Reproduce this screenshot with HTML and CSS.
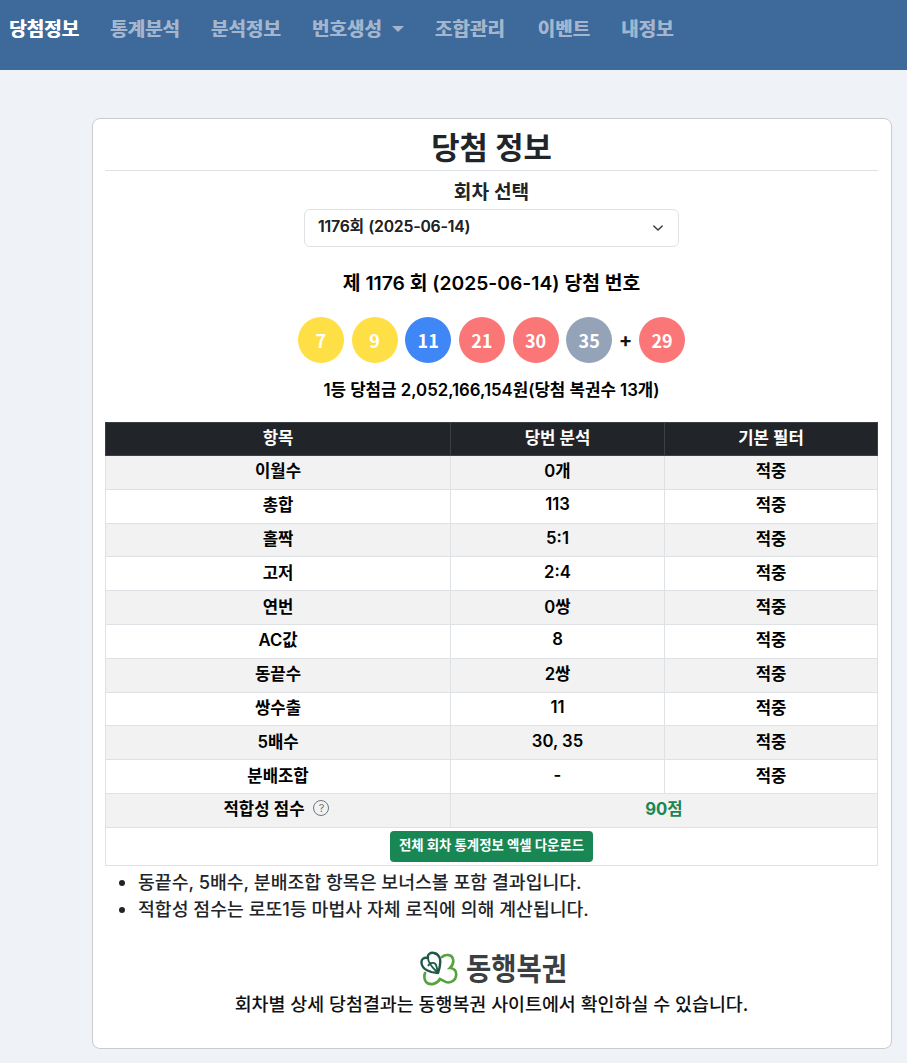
FILE: index.html
```html
<!DOCTYPE html>
<html lang="ko">
<head>
<meta charset="utf-8">
<title>당첨 정보</title>
<link rel="stylesheet" href="styles.css">
</head>
<body>
<nav class="navbar">
  <a class="nav-link active" href="#">당첨정보</a>
  <a class="nav-link" href="#">통계분석</a>
  <a class="nav-link" href="#">분석정보</a>
  <a class="nav-link" href="#">번호생성<span class="caret"></span></a>
  <a class="nav-link nav-link-wide" href="#">조합관리</a>
  <a class="nav-link" href="#">이벤트</a>
  <a class="nav-link" href="#">내정보</a>
</nav>
<main class="page">
  <section class="card">
    <h1 class="title">당첨 정보</h1>
    <div class="select-block">
      <div class="select-label">회차 선택</div>
      <div class="select">
        <span>1176회 (2025-06-14)</span>
        <svg class="chevron" width="16" height="16" viewBox="0 0 16 16"><path d="M2 5l6 6 6-6" fill="none" stroke="#343a40" stroke-width="2" stroke-linecap="round" stroke-linejoin="round" transform="translate(2.4 2.4) scale(.7)"/></svg>
      </div>
    </div>
    <h2 class="draw-title">제 1176 회 (2025-06-14) 당첨 번호</h2>
    <div class="balls">
      <span class="ball yellow">7</span>
      <span class="ball yellow">9</span>
      <span class="ball blue">11</span>
      <span class="ball red">21</span>
      <span class="ball red">30</span>
      <span class="ball gray">35</span>
      <span class="plus">+</span>
      <span class="ball red">29</span>
    </div>
    <p class="prize">1등 당첨금 2,052,166,154원(당첨 복권수 13개)</p>
    <table class="stats">
      <thead>
        <tr><th class="c1">항목</th><th class="c2">당번 분석</th><th class="c3">기본 필터</th></tr>
      </thead>
      <tbody>
        <tr><td>이월수</td><td>0개</td><td>적중</td></tr>
        <tr><td>총합</td><td>113</td><td>적중</td></tr>
        <tr><td>홀짝</td><td>5:1</td><td>적중</td></tr>
        <tr><td>고저</td><td>2:4</td><td>적중</td></tr>
        <tr><td>연번</td><td>0쌍</td><td>적중</td></tr>
        <tr><td>AC값</td><td>8</td><td>적중</td></tr>
        <tr><td>동끝수</td><td>2쌍</td><td>적중</td></tr>
        <tr><td>쌍수출</td><td>11</td><td>적중</td></tr>
        <tr><td>5배수</td><td>30, 35</td><td>적중</td></tr>
        <tr><td>분배조합</td><td>-</td><td>적중</td></tr>
        <tr class="score-row">
          <td><span class="score-label">적합성 점수<span class="help">?</span></span></td>
          <td colspan="2" class="score">90점</td>
        </tr>
        <tr class="download-row"><td colspan="3"><a class="btn" href="#">전체 회차 통계정보 엑셀 다운로드</a></td></tr>
      </tbody>
    </table>
    <ul class="notes">
      <li>동끝수, 5배수, 분배조합 항목은 보너스볼 포함 결과입니다.</li>
      <li>적합성 점수는 로또1등 마법사 자체 로직에 의해 계산됩니다.</li>
    </ul>
    <div class="logo">
      <svg width="38" height="36" viewBox="0 0 38 36">
        <path d="M22 6C25 3 32 3 33 8C34 12 32 15 30 17C34 17 37 20 36 25C35 31 28 33 24 30L20 28C17 33 10 35 6 31C4 28 4 25 5 22" fill="none" stroke="#55a33c" stroke-width="2.6" stroke-linecap="round"/>
        <path d="M18 22C10 22 2 18 1.5 12C1 8 4 6 8 7C7 3 11 1 14 2C19 3 21 8 20 13C20 16 19 19 18 22Z" fill="none" stroke="#1f5a46" stroke-width="2.4" stroke-linejoin="round"/>
        <path d="M18 22C14 18 8 13 8 7M8 15C10 11 15 11 16 14C17 16 17 19 18 22" fill="none" stroke="#1f5a46" stroke-width="1.8"/>
      </svg>
      <span class="logo-text">동행복권</span>
    </div>
    <p class="logo-note">회차별 상세 당첨결과는 동행복권 사이트에서 확인하실 수 있습니다.</p>
  </section>
</main>
</body>
</html>
```
FILE: styles.css
```css
* { box-sizing: border-box; }
html, body { margin: 0; padding: 0; }
body {
  background: #eff3f8;
  color: #212529;
  font-family: "Inter", "Noto Sans CJK KR", sans-serif;
  font-size: 16px;
  overflow: hidden;
}
.navbar {
  height: 70px;
  background: #3d6a9a;
  display: flex;
  align-items: flex-start;
  padding: 15px 0 0 9px;
  gap: 31px;
}
.nav-link {
  color: #a3b6cd;
  font-size: 19px;
  line-height: 30px;
  font-weight: 700;
  text-decoration: none;
  white-space: nowrap;
  text-shadow: 0.5px 0 0 currentColor;
}
.nav-link.active { color: #fff; }
.nav-link-wide { padding-right: 2px; }
.caret {
  display: inline-block;
  margin-left: 10px;
  vertical-align: 4px;
  border-top: 6px solid #a3b6cd;
  border-left: 6px solid transparent;
  border-right: 6px solid transparent;
}
.page { padding: 48px 15px 0 92px; }
.card {
  width: 800px;
  height: 931px;
  background: #fff;
  border: 1px solid #c9cbcf;
  border-radius: 8px;
  padding: 0 13px 0 12px;
}
.title {
  margin: 0;
  height: 52px;
  border-bottom: 1px solid #dee2e6;
  text-align: center;
  font-size: 30.8px;
  line-height: 58px;
  font-weight: 700;
}
.select-block { text-align: center; padding-top: 7px; }
.select-label { font-size: 19.2px; line-height: 28px; font-weight: 600; height: 31px; }
.select {
  width: 375px;
  height: 38px;
  margin: 0 auto;
  border: 1px solid #dee2e6;
  border-radius: 6px;
  padding: 0 12px 6px 13px;
  display: flex;
  align-items: center;
  justify-content: space-between;
  font-size: 15.7px;
  font-weight: 500;
  text-shadow: 0.2px 0 0 currentColor;
}
.chevron { margin-top: 6px; }
.draw-title {
  margin: 21px 0 0;
  text-align: center;
  color: #000;
  font-size: 19.3px;
  line-height: 30px;
  font-weight: 600;
}
.balls {
  display: flex;
  justify-content: center;
  align-items: center;
  gap: 7.67px;
  margin-top: 19px;
}
.ball {
  width: 46px;
  height: 46px;
  border-radius: 50%;
  display: flex;
  align-items: center;
  justify-content: center;
  color: #fff;
  font-family: "Noto Sans CJK KR", sans-serif;
  font-size: 18px;
  font-weight: 700;
}
.yellow { background: #ffdf46; }
.blue { background: #3f86f6; }
.red { background: #fb7676; }
.gray { background: #94a3b8; }
.plus { width: 11.66px; text-align: center; color: #111; font-size: 20px; font-weight: 700; display: flex; justify-content: center; }
.prize {
  margin: 14px 0 0;
  height: 45px;
  text-align: center;
  color: #000;
  font-size: 16.8px;
  line-height: 26px;
  font-weight: 600;
}
.stats {
  width: 772px;
  border-collapse: collapse;
  table-layout: fixed;
  font-size: 16.7px;
  color: #000;
}
.stats th, .stats td {
  border: 1px solid #dee2e6;
  text-align: center;
  font-weight: 600;
  padding: 0 0 4px;
  height: 33.8px;
}
.stats th {
  height: 33px;
  padding-bottom: 5px;
  background: #212529;
  border-color: #3b4045;
  color: #fff;
  font-weight: 600;
}
.c1 { width: 345px; }
.c2 { width: 214px; }
.c3 { width: 213px; }
.stats tbody tr:nth-child(odd) td { background: #f2f2f2; }
.stats .download-row td { background: #fff; height: 38px; padding: 0; }
.score-label { display: inline-flex; align-items: center; margin-right: 3px; }
.help {
  width: 16px;
  height: 16px;
  margin-left: 9px;
  border: 1px solid #6c757d;
  border-radius: 50%;
  color: #6c757d;
  font-size: 11px;
  line-height: 14px;
  font-weight: 400;
  text-align: center;
}
.stats td.score { color: #198754; font-weight: 700; font-size: 16.7px; }
.btn {
  display: inline-block;
  vertical-align: middle;
  width: 203px;
  height: 31px;
  background: #198754;
  color: #fff;
  border-radius: 4px;
  font-size: 13.4px;
  line-height: 28px;
  font-weight: 700;
  text-decoration: none;
}
.notes {
  margin: 3px 0 0;
  padding: 0 0 0 33px;
  font-size: 18.3px;
  line-height: 27px;
  font-weight: 500;
}
.logo {
  display: flex;
  justify-content: center;
  align-items: center;
  gap: 8px;
  margin-top: 25px;
  height: 42px;
  padding-left: 4px;
}
.logo-text { color: #3c3f42; font-size: 27.5px; font-weight: 700; line-height: 40px; transform: scaleY(1.12); }
.logo-note {
  margin: 1px 0 0;
  text-align: center;
  color: #111;
  font-size: 18.4px;
  line-height: 26px;
  font-weight: 500;
}
```
